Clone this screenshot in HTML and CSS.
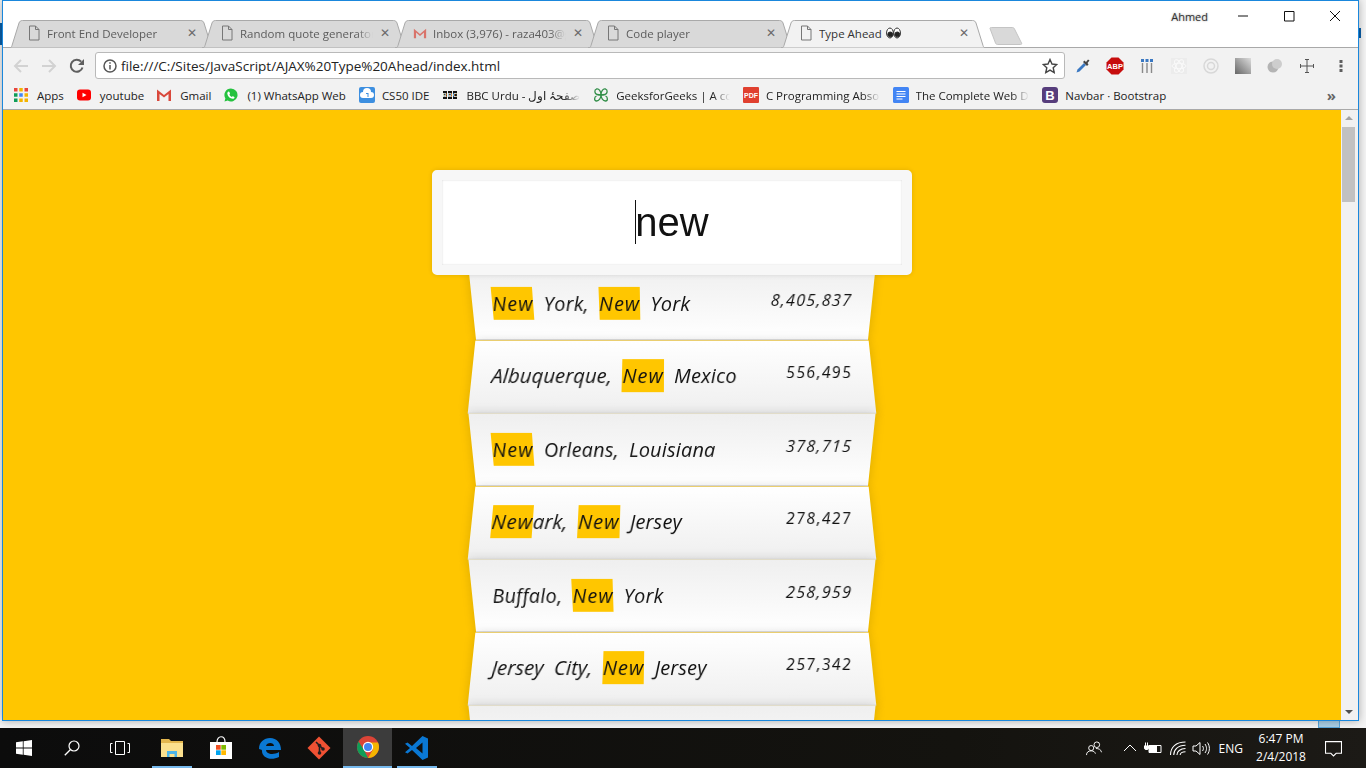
FILE: index.html
```html
<!DOCTYPE html>
<html lang="en">
<head>
  <meta charset="UTF-8" />
  <title>Type Ahead</title>
  <link rel="stylesheet" href="styles.css">
</head>
<body>
  <!-- bits of the desktop that show round the window -->
  <span class="behind mark-left"></span>
  <span class="behind mark-right"></span>
  <span class="behind tile"></span>

  <div class="window">

    <!-- tabs and window buttons -->
    <div class="tabstrip">
      <div class="tab">
        <svg class="tab-shape" viewBox="0 0 205 28"><path d="M0 28c2 0 2.500-1 3-2.500L10 3c.6-1.500 1.500-2.500 3.500-2.500h178c2 0 2.900 1 3.500 2.500l7 22.500c.5 1.500 1 2.500 3 2.500z"/></svg>
        <svg class="favicon" viewBox="0 0 14 16"><path d="M2.500 1h6l3.500 3.500v10.500h-9.500zM8.500 1v3.500h3.500"/></svg>
        <span class="tab-title">Front End Developer</span>
        <span class="tab-close">✕</span>
      </div>
      <div class="tab">
        <svg class="tab-shape" viewBox="0 0 205 28"><path d="M0 28c2 0 2.500-1 3-2.500L10 3c.6-1.500 1.500-2.500 3.500-2.500h178c2 0 2.900 1 3.500 2.500l7 22.500c.5 1.500 1 2.500 3 2.500z"/></svg>
        <svg class="favicon" viewBox="0 0 14 16"><path d="M2.500 1h6l3.500 3.500v10.500h-9.500zM8.500 1v3.500h3.500"/></svg>
        <span class="tab-title">Random quote generator</span>
        <span class="tab-close">✕</span>
      </div>
      <div class="tab">
        <svg class="tab-shape" viewBox="0 0 205 28"><path d="M0 28c2 0 2.500-1 3-2.500L10 3c.6-1.500 1.500-2.500 3.500-2.500h178c2 0 2.900 1 3.500 2.500l7 22.500c.5 1.500 1 2.500 3 2.500z"/></svg>
        <svg class="favicon gmail" viewBox="0 0 16 14"><path d="M1 13V2l7 6 7-6v11h-2.500V6.500L8 10.500 3.500 6.500V13z"/></svg>
        <span class="tab-title">Inbox (3,976) - raza403@gmail.com</span>
        <span class="tab-close">✕</span>
      </div>
      <div class="tab">
        <svg class="tab-shape" viewBox="0 0 205 28"><path d="M0 28c2 0 2.500-1 3-2.500L10 3c.6-1.500 1.500-2.500 3.500-2.500h178c2 0 2.900 1 3.500 2.500l7 22.500c.5 1.500 1 2.500 3 2.500z"/></svg>
        <svg class="favicon" viewBox="0 0 14 16"><path d="M2.500 1h6l3.500 3.500v10.500h-9.500zM8.500 1v3.500h3.500"/></svg>
        <span class="tab-title">Code player</span>
        <span class="tab-close">✕</span>
      </div>
      <div class="tab active">
        <svg class="tab-shape" viewBox="0 0 205 28"><path d="M0 28c2 0 2.500-1 3-2.500L10 3c.6-1.500 1.500-2.500 3.500-2.500h178c2 0 2.900 1 3.500 2.500l7 22.500c.5 1.500 1 2.500 3 2.500z"/></svg>
        <svg class="favicon" viewBox="0 0 14 16"><path d="M2.500 1h6l3.500 3.500v10.500h-9.500zM8.500 1v3.500h3.500"/></svg>
        <span class="tab-title">Type Ahead
          <svg class="eyes" viewBox="0 0 16 12"><ellipse cx="4.200" cy="6" rx="3.600" ry="5.300"/><ellipse cx="11.800" cy="6" rx="3.600" ry="5.300"/><circle class="pupil" cx="4.500" cy="7.500" r="2.600"/><circle class="pupil" cx="12" cy="7.500" r="2.600"/></svg>
        </span>
        <span class="tab-close">✕</span>
      </div>
      <svg class="newtab" viewBox="0 0 34 18"><path d="M1 1.500c0-1 .5-1 1.500-1h21c1 0 1.500.5 2 1.500l7 14c.5 1 0 1.500-1 1.500h-23c-1 0-1.500-.5-2-1.500z"/></svg>

      <div class="winbar">
        <span class="user">Ahmed</span>
        <svg class="winbtn" viewBox="0 0 46 16"><path d="M18 8h10"/></svg>
        <svg class="winbtn" viewBox="0 0 46 16"><path d="M18.500 3.500h9.500v9.500h-9.500z"/></svg>
        <svg class="winbtn" viewBox="0 0 46 16"><path d="M18 3l10 10M28 3l-10 10"/></svg>
      </div>
    </div>

    <!-- address bar -->
    <div class="toolbar">
      <svg class="nav off" viewBox="0 0 16 16"><path d="M15 8H2M8 2L2 8l6 6"/></svg>
      <svg class="nav off" viewBox="0 0 16 16"><path d="M1 8h13M8 2l6 6-6 6"/></svg>
      <svg class="nav" viewBox="0 0 16 16"><path d="M13.500 9.500A6 6 0 1 1 12.200 3.700"/><path class="solid" d="M15 1v6H9z"/></svg>
      <div class="omnibox">
        <svg class="info" viewBox="0 0 14 14"><circle cx="7" cy="7" r="6"/><path d="M7 6v4.500M7 3.300v1.500"/></svg>
        <span class="url">file:///C:/Sites/JavaScript/AJAX%20Type%20Ahead/index.html</span>
        <svg class="star" viewBox="0 0 16 16"><path d="M8 1.500l2 4.500 4.800.500-3.600 3.200 1 4.800L8 12.100l-4.200 2.400 1-4.800L1.200 6.500 6 6z"/></svg>
      </div>
      <div class="extensions">
        <svg class="ext" viewBox="0 0 16 16"><path fill="#3a78c2" d="M9 5l2 2-6.500 6.500-3 1 1-3z"/><path fill="#444" d="M9.500 2.500l1.500 1.500 2-2.500 1.500 1-2 2.500 1 1.500-1.500 1.500-4-4z"/></svg>
        <svg class="ext abp-icon" viewBox="0 0 18 18"><path fill="#c70d0d" d="M5.500.500h7l5 5v7l-5 5h-7l-5-5v-7z"/><text x="9" y="11.800" class="abp">ABP</text></svg>
        <svg class="ext" viewBox="0 0 16 16"><path fill="#3a78c2" d="M2 1h3v3H2zM6.500 1h3v3h-3zM11 1h3v3h-3z"/><path fill="#8a8a8a" d="M2.800 5h1.400v10H2.800zM7.300 5h1.400v10H7.300zM11.800 5h1.400v10h-1.400z"/></svg>
        <svg class="ext" viewBox="0 0 16 16"><path fill="#ececec" d="M0 0h16v16H0z"/><g fill="none" stroke="#fafafa"><ellipse cx="8" cy="8" rx="7" ry="2.800"/><ellipse cx="8" cy="8" rx="7" ry="2.800" transform="rotate(60 8 8)"/><ellipse cx="8" cy="8" rx="7" ry="2.800" transform="rotate(120 8 8)"/></g></svg>
        <svg class="ext" viewBox="0 0 16 16"><g fill="none" stroke="#d8d8d8" stroke-width="1.500"><circle cx="8" cy="8" r="7"/><circle cx="8" cy="8" r="3.500"/></g></svg>
        <svg class="ext" viewBox="0 0 16 16"><defs><linearGradient id="fade" x1="0" y1="1" x2="1" y2="0"><stop offset="0" stop-color="#666"/><stop offset="1" stop-color="#ddd"/></linearGradient></defs><path fill="url(#fade)" d="M0 0h16v16H0z"/></svg>
        <svg class="ext" viewBox="0 0 16 16"><circle cx="6" cy="9" r="5.500" fill="#b4b4b4"/><circle cx="10" cy="6" r="5" fill="#cdcdcd"/></svg>
        <svg class="ext" viewBox="0 0 16 16"><path fill="none" stroke="#555" d="M8 1v14M1 8h14M6 1.500h4M6 14.500h4M1.500 6v4M14.500 6v4"/></svg>
        <svg class="ext menu" viewBox="0 0 16 16"><path fill="#5f5f5f" d="M6.500 2h3v3h-3zM6.500 6.500h3v3h-3zM6.500 11h3v3h-3z"/></svg>
      </div>
    </div>

    <!-- bookmarks -->
    <div class="bookmarks">
      <a class="mark"><svg class="mark-icon small" viewBox="1 1 12 12"><path fill="#e8453c" d="M1 1h3v3H1z"/><path fill="#f4b400" d="M5.500 1h3v3h-3z"/><path fill="#e8453c" d="M10 1h3v3h-3z"/><path fill="#4285f4" d="M5.500 5.500h3v3h-3z"/><path fill="#0f9d58" d="M1 5.500h3v3H1z"/><path fill="#f4b400" d="M10 5.500h3v3h-3z"/><path fill="#0f9d58" d="M1 10h3v3H1z"/><path fill="#f4b400" d="M5.500 10h3v3h-3z"/><path fill="#f4b400" d="M10 10h3v3h-3z"/></svg>Apps</a>
      <a class="mark"><svg class="mark-icon small" viewBox="0 0 14 14"><rect x="0" y="1.500" width="14" height="11" rx="3" fill="#f00"/><path fill="#fff" d="M5.500 4.800L9.500 7l-4 2.200z"/></svg>youtube</a>
      <a class="mark"><svg class="mark-icon small" viewBox="0 0 14 14"><path fill="#d9483b" d="M0 13V1.500l7 5.500 7-5.500V13h-2.500V6L7 9.500 2.500 6v7z"/></svg>Gmail</a>
      <a class="mark"><svg class="mark-icon small" viewBox="0 0 14 14"><path fill="#25c23f" d="M7 .500a6.500 6.500 0 1 1-3.300 12.100L.500 13.500l.9-3.100A6.500 6.500 0 0 1 7 .500z"/><path fill="#fff" d="M4.800 3.500c.6 0 1 1.300 1.200 2 .1.400-.6.900-.6 1.200.5 1 1.300 1.700 2.300 2.200.4-.1.800-.8 1.200-.7.700.3 1.700.8 1.700 1.200-.1 1-1.200 1.500-2 1.400C6 10.500 3.600 8.200 3.300 5.700c-.1-.9.600-2.100 1.500-2.200z"/></svg>(1) WhatsApp Web</a>
      <a class="mark"><svg class="mark-icon" viewBox="0 0 16 16"><rect width="16" height="16" rx="2" fill="#3d8fe0"/><path fill="#fff" d="M4 11a3 3 0 0 1 0-6 4 4 0 0 1 8 0 3 3 0 0 1 0 6z"/><path fill="#3d8fe0" d="M7 6h2.500v4h-1V7H7z"/></svg>CS50 IDE</a>
      <a class="mark"><span class="bbc"><i>B</i><i>B</i><i>C</i></span><span class="fade">BBC Urdu - صفحۂ اول</span></a>
      <a class="mark"><svg class="mark-icon" viewBox="0 0 16 16"><path fill="none" stroke="#2f8d46" stroke-width="1.300" d="M8 8C8 4 6 1.500 3.500 2 1 3 1.500 7 4 7.500 6 8 8 8 8 8s2 0 4-.5C14.500 7 15 3 12.500 2 10 1.500 8 4 8 8zm0 0c0 3-2 6-4.500 6S1 10 3.500 9M8 8c0 3 2 6 4.500 6s2.500-4 0-5"/></svg><span class="fade">GeeksforGeeks | A computer</span></a>
      <a class="mark"><svg class="mark-icon" viewBox="0 0 16 16"><rect width="16" height="16" rx="1" fill="#e0402f"/><text x="8" y="11" class="pdf">PDF</text></svg><span class="fade">C Programming Absolute</span></a>
      <a class="mark"><svg class="mark-icon" viewBox="0 0 16 16"><rect width="16" height="16" rx="1.500" fill="#4285f4"/><path fill="#fff" d="M3.500 4h9v1h-9zM3.500 6.500h9v1h-9zM3.500 9h9v1h-9zM3.500 11.500h6v1h-6z"/></svg><span class="fade">The Complete Web Developer</span></a>
      <a class="mark"><svg class="mark-icon" viewBox="0 0 16 16"><rect width="16" height="16" rx="3" fill="#563d7c"/><text x="8" y="12.500" class="boot">B</text></svg>Navbar · Bootstrap</a>
      <span class="more">»</span>
    </div>

    <div class="viewport">
      <div class="page">
        <form class="search-form">
          <input class="search" type="text" value="new" />
          <span class="caret"></span>
          <ul class="suggestions">
            <li><span class="name"><span class="hl">New</span> York, <span class="hl">New</span> York</span><span class="population">8,405,837</span></li>
            <li><span class="name">Albuquerque, <span class="hl">New</span> Mexico</span><span class="population">556,495</span></li>
            <li><span class="name"><span class="hl">New</span> Orleans, Louisiana</span><span class="population">378,715</span></li>
            <li><span class="name"><span class="hl">New</span>ark, <span class="hl">New</span> Jersey</span><span class="population">278,427</span></li>
            <li><span class="name">Buffalo, <span class="hl">New</span> York</span><span class="population">258,959</span></li>
            <li><span class="name">Jersey City, <span class="hl">New</span> Jersey</span><span class="population">257,342</span></li>
            <li><span class="name">Rochester, <span class="hl">New</span> York</span><span class="population">210,358</span></li>
          </ul>
        </form>
      </div>
      <div class="scrollbar">
        <span class="arrow up"></span>
        <span class="thumb"></span>
        <span class="arrow down"></span>
      </div>
    </div>
  </div>

  <!-- windows taskbar -->
  <div class="taskbar">
    <div class="task shell"><svg class="task-icon" viewBox="0 0 16 16"><path fill="#fff" d="M0 2.300l6.800-1v6.300H0zM7.600 1.200L16 0v7.600H7.600zM0 8.400h6.800v6.300l-6.800-1zM7.600 8.400H16V16l-8.400-1.200z"/></svg></div>
    <div class="task shell"><svg class="task-icon" viewBox="0 0 16 16"><circle cx="10" cy="6" r="5" fill="none" stroke="#fff" stroke-width="1.200"/><path d="M6.500 9.500L.8 15.200" stroke="#fff" stroke-width="1.300"/></svg></div>
    <div class="task shell"><svg class="task-icon wide" viewBox="0 0 20 16"><path fill="none" stroke="#fff" d="M5.500 1.500h9v13h-9zM2.500 3.500h-2v9h2M17.500 3.500h2v9h-2"/></svg></div>
    <div class="task open first-app"><svg class="task-icon big" viewBox="0 0 24 24"><path fill="#e3b64e" d="M1 3h8l2 2h12v3H1z"/><path fill="#fbe08e" d="M1 7h22v14H1z"/><path fill="#4db4e8" d="M7 15h10v6h-2.500v-3h-5v3H7z"/></svg></div>
    <div class="task"><svg class="task-icon big" viewBox="0 0 24 24"><path fill="#fff" d="M1 6h22v17H1z"/><path fill="none" stroke="#fff" stroke-width="1.200" d="M8 6c0-7 8-7 8 0"/><path fill="#f25022" d="M7 9h4.700v4.700H7z"/><path fill="#7fba00" d="M12.300 9H17v4.700h-4.700z"/><path fill="#00a4ef" d="M7 14.300h4.700V19H7z"/><path fill="#ffb900" d="M12.300 14.300H17V19h-4.700z"/></svg></div>
    <div class="task"><svg class="task-icon big" viewBox="0 0 24 24"><path fill="#0a78d4" d="M1 13C1 6 6 2 12 2c7 0 11 5 11 12H8c.3 4 7 5.500 13 2v5c-8 4-17 1-17-6 0-1-.3-1.500-3-2zm7-3h8c0-4-7.500-4-8 0z"/></svg></div>
    <div class="task"><svg class="task-icon big" viewBox="0 0 24 24"><path fill="#f05133" d="M12 .500L23.500 12 12 23.500.500 12z"/><path fill="none" stroke="#231f20" stroke-width="1.600" d="M9 6l3.500 3.500M12.500 9.500v7M12.500 9.500L16 13"/><circle cx="12.500" cy="9.500" r="1.800" fill="#231f20"/><circle cx="12.500" cy="17" r="1.800" fill="#231f20"/><circle cx="16" cy="13" r="1.800" fill="#231f20"/></svg></div>
    <div class="task current"><svg class="task-icon big" viewBox="0 0 24 24"><circle cx="12" cy="12" r="11" fill="#db4437"/><path fill="#0f9d58" d="M12 23a11 11 0 0 1-9.500-16.500L8 15l4 8z"/><path fill="#f4b400" d="M23 12a11 11 0 0 1-11 11l5-8.500-5-7h10a11 11 0 0 1 1 4.500z"/><circle cx="12" cy="12" r="5.200" fill="#fff"/><circle cx="12" cy="12" r="4" fill="#4285f4"/></svg></div>
    <div class="task open"><svg class="task-icon big" viewBox="0 0 24 24"><path fill="#0a78d4" d="M17.500 0L23 2.500v19L17.500 24 7 14l-4.500 3.500L0 16.200 5 12 0 7.800l2.500-1.300L7 10zm0 6.500L11 12l6.500 5.500z"/></svg></div>

    <div class="tray">
      <svg class="tray-icon" viewBox="0 0 18 16"><g fill="none" stroke="#fff"><circle cx="12" cy="4" r="3"/><circle cx="6" cy="7.500" r="2.700"/><path d="M1 15c0-3 2-4.500 5-4.500s4 1.500 4.500 3M11 8c3 0 5.500 1 6 4"/></g></svg>
      <svg class="tray-icon chev" viewBox="0 0 14 8"><path fill="none" stroke="#fff" d="M1 7l6-6 6 6"/></svg>
      <svg class="tray-icon" viewBox="0 0 18 14"><path fill="none" stroke="#fff" d="M5 4h12v7H5z"/><path fill="#fff" d="M5 4h8v7H5zM0 4h5v3l-1.500 1.500h-2L0 7zM1 1h1v3H1zM3 1h1v3H3z"/></svg>
      <svg class="tray-icon wifi" viewBox="0 0 16 14"><g fill="none" stroke="#fff"><path d="M1 13C1 6 6 1 15 1"/><path d="M4 13c0-5 4-9 11-9"/><path d="M7 13c0-3 3-6 8-6"/><path d="M10 13c0-1.500 2-3 5-3"/></g></svg>
      <svg class="tray-icon" viewBox="0 0 18 14"><g fill="none" stroke="#fff"><path d="M1 4.500h3L8 1v12L4 9.500H1z"/><path d="M10.500 4.500c1.200 1.500 1.200 3.500 0 5M13 2.500c2 3 2 6 0 9M15.500 1c2.500 3.500 2.500 8.500 0 12"/></g></svg>
      <span class="lang">ENG</span>
      <div class="clock"><span>6:47 PM</span><span>2/4/2018</span></div>
      <svg class="tray-icon note" viewBox="0 0 16 16"><path fill="none" stroke="#fff" d="M.500 1.500h15v11h-5l-2.500 2.500-2.500-2.500h-5z"/></svg>
    </div>
  </div>
</body>
</html>
```

FILE: styles.css
```css
* {
  box-sizing: border-box;
}

html, body {
  margin: 0;
  padding: 0;
  height: 100%;
}

body {
  position: relative;
  display: flex;
  flex-direction: column;
  background: #f4f4f4;
  font-family: "Open Sans", "Noto Sans", sans-serif;
  font-size: 11.500px;
  overflow: hidden;
}

.behind {
  position: absolute;
}

.mark-left {
  left: 0;
  top: 23px;
  width: 2px;
  height: 22px;
  background: #0a5fa8;
}

.mark-right {
  left: 1359px;
  top: 28px;
  width: 2px;
  height: 10px;
  background: #0a5fa8;
}

.tile {
  left: 1318px;
  top: 721px;
  width: 22px;
  height: 7px;
  background: #a9cfe6;
  border: 1px solid #5aa5d8;
  border-top: 0;
}

.window {
  position: relative;
  flex: 1;
  min-height: 0;
  display: flex;
  flex-direction: column;
  margin: 0 7px 7px 2px;
  border: 1px solid #1a87dc;
  background: #fff;
  box-shadow: 0 0 8px rgba(0, 0, 0, 0.3);
}

/* tabs */
.tabstrip {
  height: 47px;
  flex: none;
  display: flex;
  align-items: flex-end;
  padding-left: 6px;
  border-bottom: 1px solid #a9a9a9;
}

.tab {
  position: relative;
  width: 205px;
  height: 28px;
  flex: none;
  margin-right: -12px;
  margin-bottom: -1px;
  display: flex;
  align-items: center;
  padding: 0 0 2px 18px;
  color: #5c5c5c;
}

.tab-shape {
  position: absolute;
  left: 0;
  top: 0;
  width: 205px;
  height: 28px;
}

.tab-shape path {
  fill: #d9d9d9;
  stroke: #a9a9a9;
}

.tab.active {
  z-index: 2;
  color: #333;
}

.tab.active .tab-shape path {
  fill: #f2f2f2;
}

.favicon {
  position: relative;
  width: 14px;
  height: 16px;
  flex: none;
  fill: none;
  stroke: #777;
}

.favicon.gmail {
  fill: #d9736a;
  stroke: none;
}

.tab-title {
  position: relative;
  width: 133px;
  margin-left: 6px;
  white-space: nowrap;
  overflow: hidden;
  -webkit-mask-image: linear-gradient(to right, #000 88%, transparent);
  mask-image: linear-gradient(to right, #000 88%, transparent);
  display: flex;
  align-items: center;
  gap: 4px;
}

.tab.active .tab-title {
  -webkit-mask-image: none;
  mask-image: none;
}

.eyes {
  width: 15px;
  height: 12px;
  flex: none;
  fill: #fff;
  stroke: #222;
}

.eyes .pupil {
  fill: #222;
}

.tab-close {
  position: relative;
  margin-left: 7px;
  width: 12px;
  font-size: 12px;
  line-height: 12px;
  font-weight: 700;
  color: #6a6a6a;
  font-family: "DejaVu Sans", sans-serif;
}

.newtab {
  width: 34px;
  height: 18px;
  flex: none;
  margin: 0 0 2px 15px;
  fill: #d9d9d9;
  stroke: #c4c4c4;
}

.winbar {
  margin-left: auto;
  align-self: flex-start;
  display: flex;
  align-items: center;
  height: 30px;
}

.user {
  margin-right: 12px;
  font-size: 11px;
  color: #333;
  text-shadow: 0 0 2px #999;
}

.winbtn {
  width: 46px;
  height: 16px;
  fill: none;
  stroke: #111;
}

/* address bar */
.toolbar {
  height: 32px;
  flex: none;
  display: flex;
  align-items: center;
  padding: 4px 0 1px 10px;
  background: #f2f2f2;
}

.nav {
  width: 16px;
  height: 16px;
  flex: none;
  margin-right: 12px;
  fill: none;
  stroke: #5f5f5f;
  stroke-width: 2;
}

.nav.off {
  stroke: #d2d2d2;
}

.nav .solid {
  fill: #5f5f5f;
  stroke: none;
}

.omnibox {
  width: 970px;
  height: 27px;
  flex: none;
  margin-left: -2px;
  display: flex;
  align-items: center;
  padding: 0 6px 0 7px;
  background: #fff;
  border: 1px solid #b9b9b9;
  border-radius: 3px;
}

.info {
  width: 14px;
  height: 14px;
  flex: none;
  fill: none;
  stroke: #555;
  stroke-width: 1.500;
}

.url {
  margin-left: 4px;
  font-size: 13.500px;
  color: #222;
}

.star {
  width: 16px;
  height: 16px;
  margin-left: auto;
  fill: none;
  stroke: #444;
  stroke-width: 1.400;
}

.extensions {
  display: flex;
  align-items: center;
  gap: 16px;
  margin-left: 10px;
}

.ext {
  width: 16px;
  height: 16px;
  flex: none;
}

.ext.abp-icon {
  width: 18px;
  height: 18px;
  margin: 0 -1px;
}

.ext.menu {
  margin-left: 2px;
}

.abp {
  font: 700 7.500px "Liberation Sans", sans-serif;
  fill: #fff;
  text-anchor: middle;
}

/* bookmarks */
.bookmarks {
  height: 30px;
  flex: none;
  display: flex;
  align-items: center;
  gap: 13px;
  padding: 1px 22px 0 11px;
  background: #f2f2f2;
  border-bottom: 1px solid #a9a9a9;
}

.mark {
  display: flex;
  align-items: center;
  gap: 7px;
  color: #222;
  white-space: nowrap;
  flex: none;
}

.mark-icon {
  width: 16px;
  height: 16px;
  flex: none;
}

.mark-icon.small {
  width: 14px;
  height: 14px;
  margin-right: 2px;
}

.fade {
  width: 113.700px;
  overflow: hidden;
  -webkit-mask-image: linear-gradient(to right, #000 85%, transparent);
  mask-image: linear-gradient(to right, #000 85%, transparent);
}

.bbc {
  display: flex;
  gap: 1px;
  width: 15px;
  margin-right: 2px;
  flex: none;
}

.bbc i {
  width: 4.300px;
  background: #111;
  color: #fff;
  font: 700 6px/8px "Liberation Sans", sans-serif;
  text-align: center;
}

.pdf, .boot {
  fill: #fff;
  font-family: "Liberation Sans", sans-serif;
  font-weight: 700;
  text-anchor: middle;
}

.pdf {
  font-size: 7px;
}

.boot {
  font-size: 13px;
}

.more {
  margin-left: auto;
  font-size: 15px;
  font-weight: 700;
  color: #666;
}

/* the page in the browser */
.viewport {
  flex: 1;
  min-height: 0;
  display: flex;
}

.page {
  flex: 1;
  min-width: 0;
  background: #ffc600;
  overflow: hidden;
}

.search-form {
  position: relative;
  max-width: 400px;
  margin: 60px auto 0;
}

.search {
  position: relative;
  z-index: 2;
  display: block;
  width: 120%;
  height: 105px;
  margin: 0 0 -10px -10%;
  padding: 20px;
  text-align: center;
  outline: 0;
  color: #111;
  background: #fff;
  border: 10px solid #f7f7f7;
  border-radius: 5px;
  font-family: "Liberation Sans", Arial, sans-serif;
  font-size: 40px;
  box-shadow: 0 0 5px rgba(0, 0, 0, 0.12), inset 0 0 2px rgba(0, 0, 0, 0.19);
}

.caret {
  position: absolute;
  z-index: 3;
  left: 163px;
  top: 30px;
  width: 1px;
  height: 44px;
  background: #111;
}

.suggestions {
  margin: 0;
  padding: 0;
  font-family: "Open Sans", sans-serif;
  font-style: italic;
  color: #111;
}

.suggestions li {
  list-style: none;
  display: flex;
  justify-content: space-between;
  height: 73px;
  padding: 20px;
  font-size: 20px;
  line-height: 32px;
  word-spacing: 5px;
  letter-spacing: 0.150px;
  border-bottom: 1px solid #d8d8d8;
  box-shadow: 0 0 10px rgba(0, 0, 0, 0.14);
}

.suggestions li:nth-child(even) {
  transform: perspective(100px) rotateX(3deg) translateY(2px) scale(1.001);
  background: linear-gradient(to bottom, #fff 0%, #efefef 100%);
}

.suggestions li:nth-child(odd) {
  transform: perspective(100px) rotateX(-3deg) translateY(3px);
  background: linear-gradient(to top, #fff 0%, #efefef 100%);
}

.population {
  font-size: 16px;
  line-height: 25px;
  letter-spacing: 1.300px;
}

.hl {
  background: #ffc600;
  padding: 3px 0;
  letter-spacing: 1px;
}

.scrollbar {
  width: 17px;
  flex: none;
  display: flex;
  flex-direction: column;
  align-items: center;
  padding-right: 2px;
  background: #f1f1f1;
}

.arrow {
  width: 0;
  height: 0;
  border-left: 4px solid transparent;
  border-right: 4px solid transparent;
}

.arrow.up {
  margin-top: 6px;
  border-bottom: 4px solid #a3a3a3;
}

.arrow.down {
  margin-top: auto;
  margin-bottom: 6px;
  border-top: 4px solid #505050;
}

.thumb {
  width: 13px;
  height: 75px;
  margin-top: 7px;
  background: #c1c1c1;
}

/* taskbar */
.taskbar {
  height: 40px;
  flex: none;
  display: flex;
  align-items: stretch;
  background: linear-gradient(to right, #0c0c0c, #14130f 70%, #1c1a16);
  color: #fff;
  font-size: 12px;
}

.task {
  width: 49px;
  flex: none;
  display: flex;
  align-items: center;
  justify-content: center;
}

.task.shell {
  width: 48px;
}

.task.first-app {
  margin-left: 3px;
}

.task.open {
  background: linear-gradient(#76b9ed, #76b9ed) center bottom / 40px 2px no-repeat;
}

.task.current {
  background: #3c3c3c;
  border-bottom: 2px solid #76b9ed;
}

.task-icon {
  width: 16px;
  height: 16px;
}

.task-icon.wide {
  width: 20px;
}

.task-icon.big {
  width: 24px;
  height: 24px;
}

.tray {
  margin-left: auto;
  display: flex;
  align-items: center;
  gap: 7px;
  padding-right: 24px;
}

.tray-icon {
  width: 18px;
  height: 15px;
  flex: none;
}

.tray-icon.chev {
  width: 14px;
  height: 8px;
  margin-left: 13px;
}

.tray-icon.wifi {
  margin-right: -2px;
}

.tray-icon.note {
  width: 17px;
  height: 17px;
  margin-left: 13px;
}

.lang {
  margin-left: 2px;
  margin-right: 7px;
}

.clock {
  display: flex;
  flex-direction: column;
  align-items: center;
  line-height: 18px;
  width: 48px;
  white-space: nowrap;
}
```
